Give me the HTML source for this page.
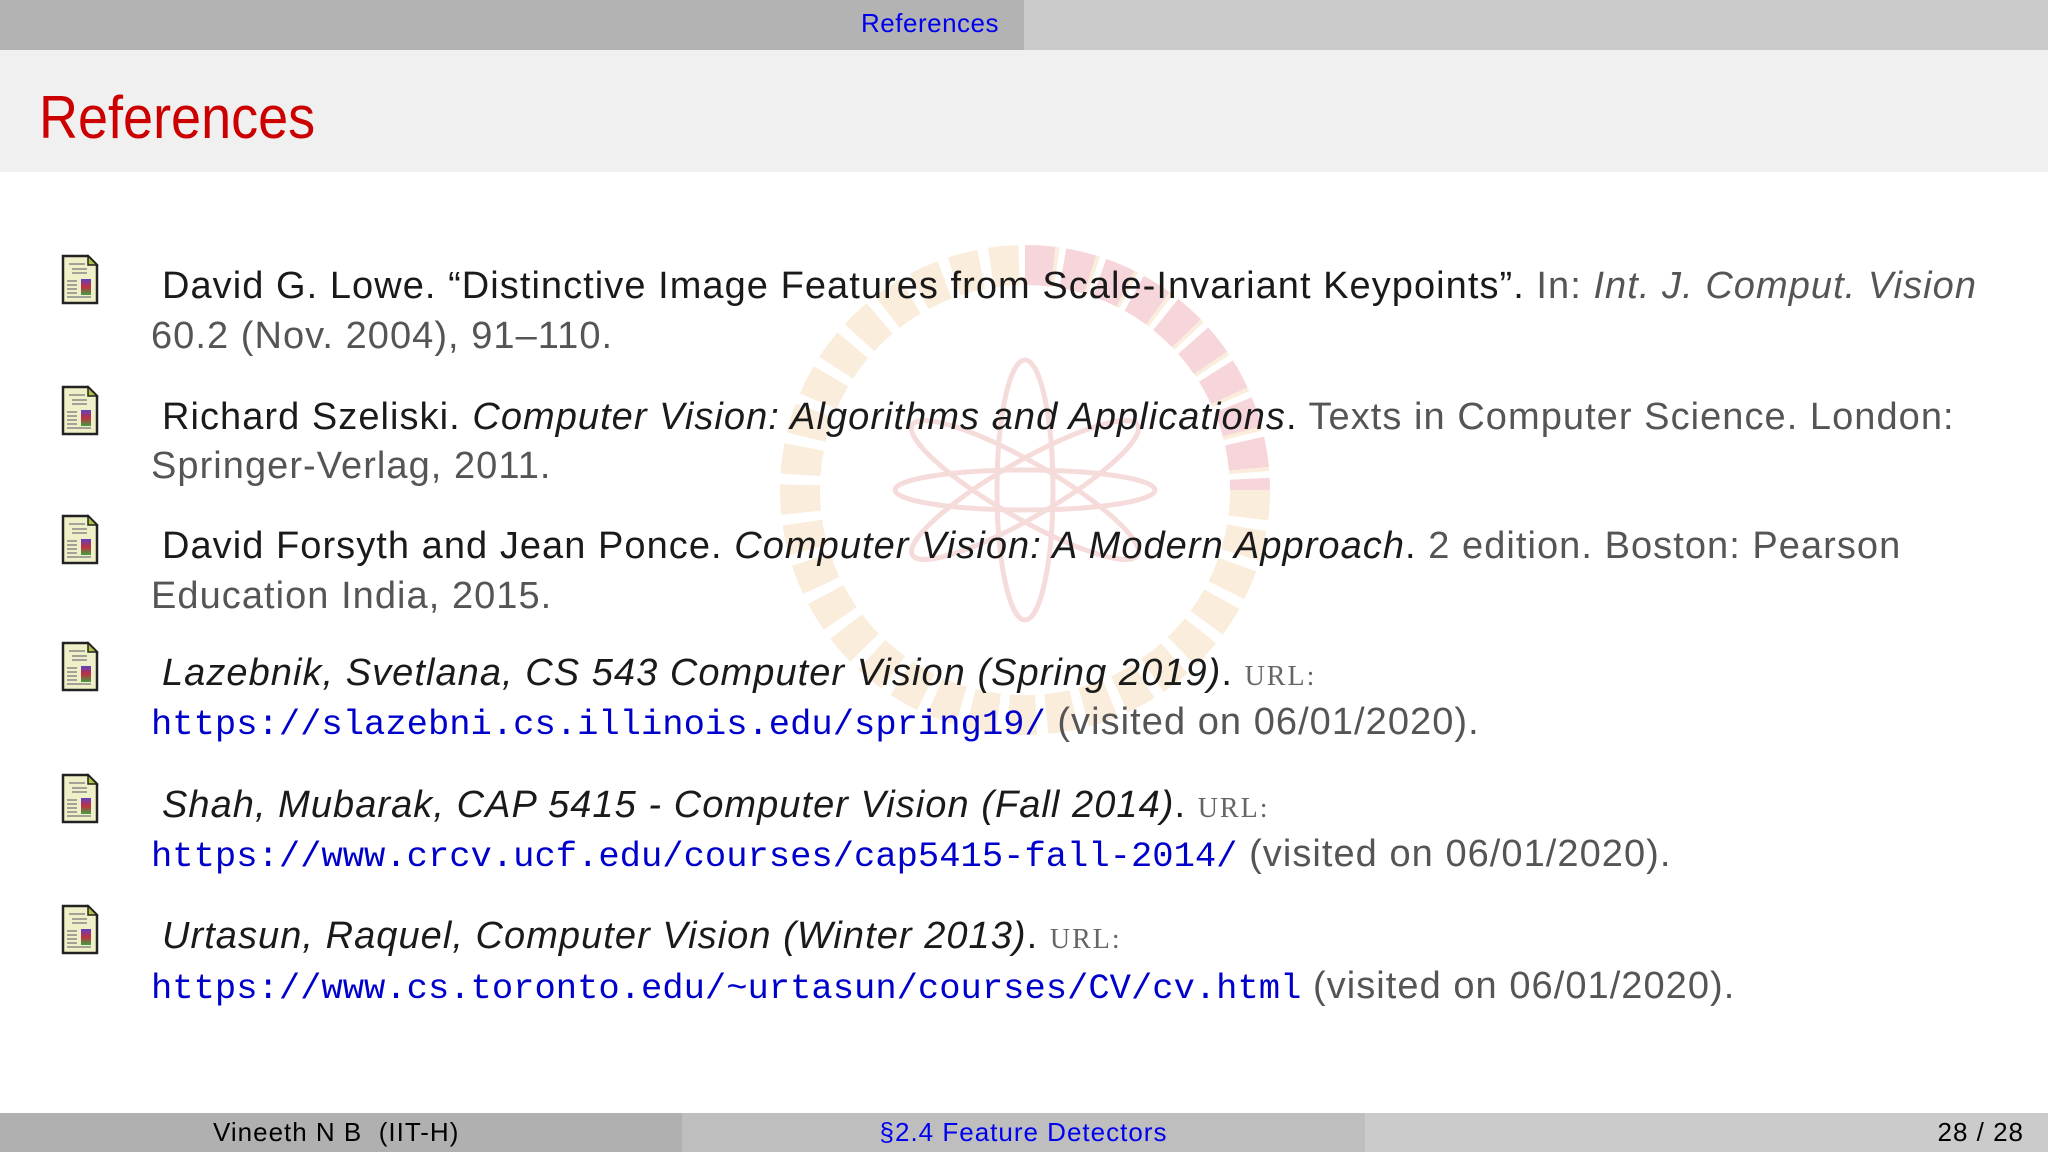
<!DOCTYPE html>
<html><head><meta charset="utf-8"><style>
html,body{margin:0;padding:0}
body{width:2048px;height:1152px;position:relative;overflow:hidden;background:#fff;font-family:"Liberation Sans",sans-serif}
.hdrL{position:absolute;left:0;top:0;width:1024px;height:50px;background:#b3b3b3}
.hdrR{position:absolute;left:1024px;top:0;width:1024px;height:50px;background:#cbcbcb}
.hdrT{position:absolute;right:1049px;top:8px;font-size:26px;color:#0000ee;line-height:30px;letter-spacing:0.5px}
.band{position:absolute;left:0;top:50px;width:2048px;height:122px;background:#f0f0f0}
.title{position:absolute;left:39px;top:88px;font-size:60px;color:#cc0000;line-height:1;transform:scaleX(0.9);transform-origin:left}
.l{position:absolute;white-space:nowrap;font-size:38px;line-height:38px;color:#1a1a1a;letter-spacing:1.05px}
.g{color:#555}
.m{font-family:"Liberation Mono",monospace;color:#0000cc;font-size:35.5px;letter-spacing:0}
.sc{font-family:"Liberation Serif",serif;font-size:28px;color:#666;letter-spacing:2px}
.ic{position:absolute;left:61px}
.f{position:absolute;top:1113px;height:39px;font-size:26px;line-height:39px;letter-spacing:1px}
</style></head><body>
<div class="hdrL"></div><div class="hdrR"></div>
<div class="hdrT">References</div>
<div class="band"></div>
<div class="title">References</div>

<svg style="position:absolute;left:780px;top:245px;opacity:0.18" width="490" height="490" viewBox="0 0 490 490">
<circle cx="245" cy="245" r="225" fill="none" stroke="#e8a040" stroke-width="40" stroke-dasharray="28 10"/>
<path d="M245 20 A225 225 0 0 1 470 245" fill="none" stroke="#d02040" stroke-width="40" stroke-dasharray="28 10"/>
<g fill="none" stroke="#d04040" stroke-width="5">
<ellipse cx="245" cy="245" rx="28" ry="130"/>
<ellipse cx="245" cy="245" rx="28" ry="130" transform="rotate(60 245 245)"/>
<ellipse cx="245" cy="245" rx="28" ry="130" transform="rotate(120 245 245)"/>
<ellipse cx="245" cy="245" rx="130" ry="20"/>
</g>
</svg>

<svg width="0" height="0" style="position:absolute"><defs>
<linearGradient id="gr" x1="0" y1="0" x2="0" y2="1"><stop offset="0" stop-color="#6040c0"/><stop offset="0.5" stop-color="#c03040"/><stop offset="1" stop-color="#40a040"/></linearGradient>
<g id="doc"><path d="M2 2 H27 L36 11 V49 H2 Z" fill="#f0f0c8" stroke="#222" stroke-width="2.5"/><path d="M27 2 V11 H36 Z" fill="#b0c040" stroke="#222" stroke-width="1.5"/>
<g stroke="#888" stroke-width="1.5"><line x1="8" y1="10" x2="24" y2="10"/><line x1="11" y1="15" x2="26" y2="15"/><line x1="11" y1="19" x2="26" y2="19"/><line x1="6" y1="27" x2="16" y2="27"/><line x1="6" y1="31" x2="16" y2="31"/><line x1="6" y1="35" x2="16" y2="35"/><line x1="6" y1="39" x2="16" y2="39"/><line x1="6" y1="43" x2="30" y2="43"/></g>
<rect x="20" y="25" width="10" height="16" fill="url(#gr)"/></g></defs></svg>

<svg class="ic" style="top:254px" width="40" height="52"><use href="#doc"/></svg>
<svg class="ic" style="top:385px" width="40" height="52"><use href="#doc"/></svg>
<svg class="ic" style="top:514px" width="40" height="52"><use href="#doc"/></svg>
<svg class="ic" style="top:641px" width="40" height="52"><use href="#doc"/></svg>
<svg class="ic" style="top:773px" width="40" height="52"><use href="#doc"/></svg>
<svg class="ic" style="top:904px" width="40" height="52"><use href="#doc"/></svg>

<div class="l" style="left:162px;top:267px">David G. Lowe. “Distinctive Image Features from Scale-Invariant Keypoints”. <span class="g">In: <i>Int. J. Comput. Vision</i></span></div>
<div class="l g" style="left:151px;top:317px">60.2 (Nov. 2004), 91–110.</div>

<div class="l" style="left:162px;top:398px">Richard Szeliski. <i>Computer Vision: Algorithms and Applications</i>. <span class="g">Texts in Computer Science. London:</span></div>
<div class="l g" style="left:151px;top:447px">Springer-Verlag, 2011.</div>

<div class="l" style="left:162px;top:527px">David Forsyth and Jean Ponce. <i>Computer Vision: A Modern Approach</i>. <span class="g">2 edition. Boston: Pearson</span></div>
<div class="l g" style="left:151px;top:577px">Education India, 2015.</div>

<div class="l" style="left:162px;top:654px"><i>Lazebnik, Svetlana, CS 543 Computer Vision (Spring 2019)</i>. <span class="sc">URL:</span></div>
<div class="l g" style="left:151px;top:703px"><span class="m">https://slazebni.cs.illinois.edu/spring19/</span> (visited on 06/01/2020).</div>

<div class="l" style="left:162px;top:786px"><i>Shah, Mubarak, CAP 5415 - Computer Vision (Fall 2014)</i>. <span class="sc">URL:</span></div>
<div class="l g" style="left:151px;top:835px"><span class="m">https://www.crcv.ucf.edu/courses/cap5415-fall-2014/</span> (visited on 06/01/2020).</div>

<div class="l" style="left:162px;top:917px"><i>Urtasun, Raquel, Computer Vision (Winter 2013)</i>. <span class="sc">URL:</span></div>
<div class="l g" style="left:151px;top:967px"><span class="m">https://www.cs.toronto.edu/~urtasun/courses/CV/cv.html</span> (visited on 06/01/2020).</div>

<div class="f" style="left:0;width:682px;background:#b0b0b0"><span style="position:absolute;left:213px">Vineeth N B &nbsp;(IIT-H)</span></div>
<div class="f" style="left:682px;width:683px;background:#bebebe;text-align:center;color:#0000ee">§2.4 Feature Detectors</div>
<div class="f" style="left:1365px;width:683px;background:#cbcbcb"><span style="position:absolute;right:24px">28 / 28</span></div>
</body></html>
